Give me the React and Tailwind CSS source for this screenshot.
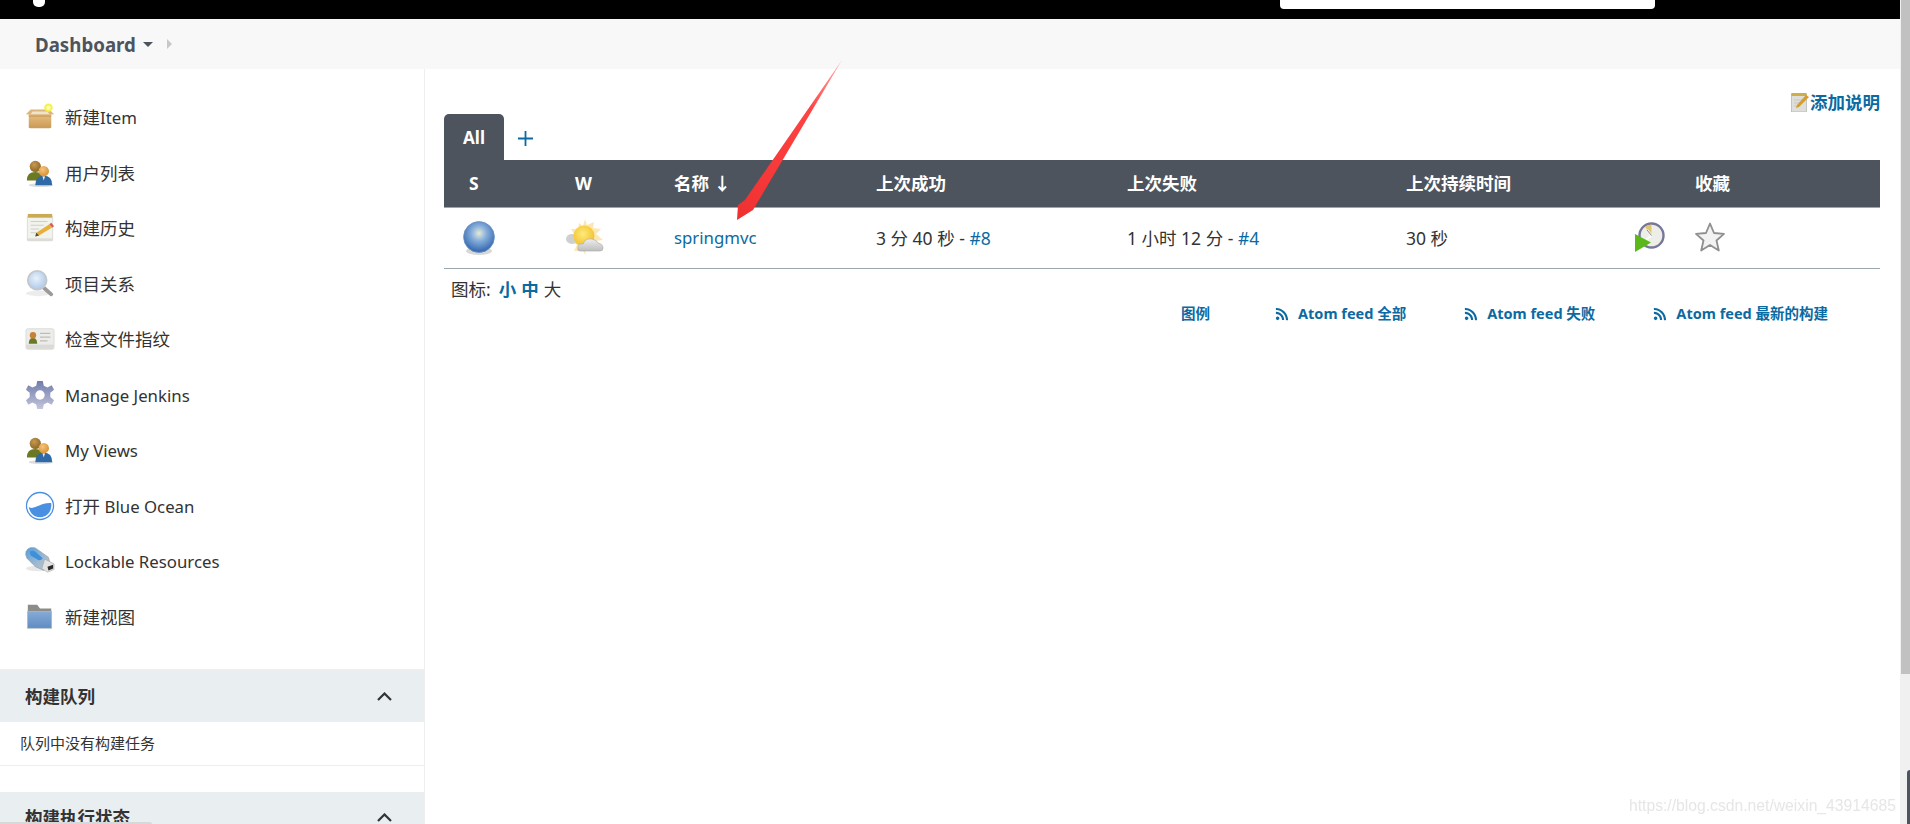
import React from 'react'
import { FaRss } from 'react-icons/fa'

function BoxIcon() {
    return (
        <svg viewBox="0 0 32 32" className="w-[30px] h-[30px]">
            <defs>
                <linearGradient id="boxG" x1="0" y1="0" x2="0" y2="1">
                    <stop offset="0" stopColor="#e8bd7c" />
                    <stop offset="1" stopColor="#c99a58" />
                </linearGradient>
            </defs>
            <path d="M4 13 H28 V27 Q28 28 26 28 H6 Q4 28 4 27 Z" fill="url(#boxG)" />
            <path d="M1 13 L6 8 H26 L31 13 L20 14 H10 Z" fill="#dcb67e" />
            <path d="M8 10 H24 L26 13 H6 Z" fill="#efe3cc" />
            <path d="M4 15 H28" stroke="#b78a4c" strokeWidth="0.8" />
            <circle cx="25" cy="6" r="4.5" fill="#f6f04a" />
            <circle cx="25" cy="6" r="2.4" fill="#fdfbb0" />
        </svg>
    )
}

function UsersIcon({ id }) {
    return (
        <svg viewBox="0 0 32 32" className="w-[30px] h-[30px]">
            <defs>
                <radialGradient id={id + 'a'} cx="0.4" cy="0.35" r="0.7">
                    <stop offset="0" stopColor="#c89a52" />
                    <stop offset="1" stopColor="#8a6222" />
                </radialGradient>
                <radialGradient id={id + 'b'} cx="0.4" cy="0.35" r="0.7">
                    <stop offset="0" stopColor="#f4c57c" />
                    <stop offset="1" stopColor="#d98e2e" />
                </radialGradient>
            </defs>
            <ellipse cx="17" cy="29" rx="13" ry="2" fill="#ddd" />
            <path d="M2 24 Q2 15 11 15 Q19 15 19 24 Z" fill="#6b7a22" />
            <circle cx="11" cy="9" r="6" fill={`url(#${id}a)`} />
            <path d="M11 29 Q11 19 20 19 Q29 19 29 29 Z" fill="#2f6aa6" />
            <path d="M18.6 19.5 L20 24 L21.4 19.5 Z" fill="#f2f2f2" />
            <circle cx="20" cy="14" r="5.6" fill={`url(#${id}b)`} />
        </svg>
    )
}

function NotepadIcon() {
    return (
        <svg viewBox="0 0 32 32" className="w-[30px] h-[30px]">
            <rect x="2" y="3" width="28" height="27" rx="1.5" fill="#dcdcd8" />
            <rect x="3" y="2" width="26" height="25" fill="#f3f3ee" />
            <rect x="3" y="1" width="26" height="4" fill="#c9ab55" />
            <path d="M6 9 H24 M6 13 H20 M6 17 H15 M6 21 H12" stroke="#cfcfc8" strokeWidth="1.2" />
            <path d="M11 25 L12 21 L26 12 L29 15.5 L15 24 Z" fill="#e5b13d" />
            <path d="M26 12 L28 10.5 L31 14 L29 15.5 Z" fill="#d8584c" />
            <path d="M11 25 L12 21 L15 24 Z" fill="#4a4a44" />
        </svg>
    )
}

function SearchIcon() {
    return (
        <svg viewBox="0 0 32 32" className="w-[30px] h-[30px]">
            <defs>
                <radialGradient id="lensG" cx="0.45" cy="0.4" r="0.65">
                    <stop offset="0" stopColor="#e8f1fb" />
                    <stop offset="1" stopColor="#a9c6e6" />
                </radialGradient>
            </defs>
            <ellipse cx="14" cy="26" rx="13" ry="3" fill="#ececec" />
            <path d="M20 20 L28 27" stroke="#9a9a9a" strokeWidth="4" strokeLinecap="round" />
            <circle cx="13" cy="12" r="10" fill="url(#lensG)" stroke="#c4c8cc" strokeWidth="2" />
        </svg>
    )
}

function CardIcon() {
    return (
        <svg viewBox="0 0 32 32" className="w-[30px] h-[30px]">
            <rect x="1" y="5" width="30" height="22" rx="2" fill="#ececea" stroke="#d6d6d2" strokeWidth="0.8" />
            <rect x="1.5" y="22" width="29" height="4.5" fill="#dadad6" />
            <path d="M4 21 Q4 15 8.5 15 Q13 15 13 21 Z" fill="#6b7a22" />
            <circle cx="8.5" cy="12" r="3.4" fill="#c8803a" />
            <path d="M16 10 H27 M16 14 H27 M16 18 H24" stroke="#bdbdb8" strokeWidth="1.2" />
        </svg>
    )
}

function GearIcon() {
    return (
        <svg viewBox="0 0 32 32" className="w-[30px] h-[30px]">
            <defs>
                <linearGradient id="gearG" x1="0" y1="0" x2="0" y2="1">
                    <stop offset="0" stopColor="#6f7cab" />
                    <stop offset="1" stopColor="#c4c5dc" />
                </linearGradient>
            </defs>
            <path
                d="M13 1 H19 L20 6 L24 8 L28.5 5.5 L31 10.5 L27 13.5 V18 L31 21.5 L28.5 26.5 L24 24 L20 26 L19 31 H13 L12 26 L8 24 L3.5 26.5 L1 21.5 L5 18 V13.5 L1 10.5 L3.5 5.5 L8 8 L12 6 Z"
                fill="url(#gearG)"
            />
            <circle cx="16" cy="16" r="5" fill="#fff" />
        </svg>
    )
}

function OceanIcon() {
    return (
        <svg viewBox="0 0 32 32" className="w-[30px] h-[30px]">
            <circle cx="16" cy="16" r="14.4" fill="#fff" stroke="#4a90e2" strokeWidth="1.4" />
            <path d="M4 17 C10 21 16 12 28 13 C29 21 24 28 16 28 C9 28 5 23 4 17 Z" fill="#4a90e2" />
        </svg>
    )
}

function UsbIcon() {
    return (
        <svg viewBox="0 0 32 32" className="w-[30px] h-[30px]">
            <defs>
                <linearGradient id="usbG" x1="0" y1="0" x2="1" y2="1">
                    <stop offset="0" stopColor="#4f9fe0" />
                    <stop offset="0.55" stopColor="#9db8d0" />
                    <stop offset="1" stopColor="#bfc5cb" />
                </linearGradient>
            </defs>
            <ellipse cx="14" cy="24" rx="13" ry="3" fill="#e8e8e8" />
            <path d="M1 6 Q4 0 11 2 L25 12 L27 19 L20 26 L11 22 L2 13 Q0 9 1 6 Z" fill="url(#usbG)" stroke="#8d99a5" strokeWidth="0.6" />
            <path d="M5 6 Q8 4 11 6 L19 13 Q17 16 14 15 L6 10 Z" fill="#3f90d8" />
            <path d="M21 14 L31 19 L31 25 L24 28 L18 24 Z" fill="#e2e2e2" stroke="#999" strokeWidth="0.5" />
            <path d="M24 22 L30 20 L30 24 L25 26 Z" fill="#2a2a2a" />
        </svg>
    )
}

function FolderIcon() {
    return (
        <svg viewBox="0 0 32 32" className="w-[30px] h-[30px]">
            <path d="M3 3 H13 L16 7 H28 V14 H3 Z" fill="#8c8c88" />
            <defs>
                <linearGradient id="folderG" x1="0" y1="0" x2="0" y2="1">
                    <stop offset="0" stopColor="#86abd6" />
                    <stop offset="1" stopColor="#5f8dc2" />
                </linearGradient>
            </defs>
            <rect x="2.5" y="10" width="26" height="18" fill="url(#folderG)" stroke="#b6bcc2" strokeWidth="0.7" />
        </svg>
    )
}

function BallIcon() {
    return (
        <svg viewBox="0 0 34 36" className="w-[34px] h-[36px]">
            <defs>
                <radialGradient id="ballG" cx="0.5" cy="0.38" r="0.62">
                    <stop offset="0" stopColor="#e4ead6" />
                    <stop offset="0.4" stopColor="#86aedb" />
                    <stop offset="1" stopColor="#2f64ac" />
                </radialGradient>
            </defs>
            <ellipse cx="17" cy="31" rx="13" ry="4" fill="#d8d8d8" />
            <circle cx="17" cy="17" r="15.4" fill="url(#ballG)" stroke="#6a8fc0" strokeWidth="0.8" />
        </svg>
    )
}

function WeatherIcon() {
    return (
        <svg viewBox="0 0 40 38" className="w-[40px] h-[38px]">
            <defs>
                <radialGradient id="sunG" cx="0.45" cy="0.4" r="0.6">
                    <stop offset="0" stopColor="#fdeb7a" />
                    <stop offset="1" stopColor="#f3c02c" />
                </radialGradient>
                <linearGradient id="cloudG" x1="0" y1="0" x2="0" y2="1">
                    <stop offset="0" stopColor="#eeeeee" />
                    <stop offset="1" stopColor="#bdbdbd" />
                </linearGradient>
            </defs>
            <path
                d="M20 0 L22 6 L29 3 L28 9 L36 10 L31 15 L38 21 L30 22 L20 32 L21 37 L18 32 L9 32 L12 26 L5 22 L11 18 L6 10 L13 10 L14 4 L18 7 Z"
                fill="#fbe7b4"
            />
            <ellipse cx="7" cy="20" rx="6" ry="5" fill="#cfcfcf" />
            <circle cx="19" cy="17" r="10.5" fill="url(#sunG)" />
            <path
                d="M15 32 Q12 32 13 28 Q13 24 18 25 Q20 19 27 20 Q32 21 33 24 Q38 25 38 29 Q38 32 35 32 Z"
                fill="url(#cloudG)"
                stroke="#a8a8a8"
                strokeWidth="0.6"
            />
        </svg>
    )
}

function BuildIcon() {
    return (
        <svg viewBox="0 0 30 30" className="w-[30px] h-[30px]">
            <circle cx="16.5" cy="13.5" r="12" fill="#eeeee8" stroke="#77779a" strokeWidth="2.4" />
            <path d="M16.5 13.5 L10 5 Q13 2.5 16.5 2.5 L16.5 13.5 Z" fill="#e2c76a" />
            <path d="M16.5 13.5 L12 8 M16.5 13.5 L11 18" stroke="#f8f8f8" strokeWidth="2.4" />
            <path d="M16.5 13.5 L12 8" stroke="#666" strokeWidth="0.8" />
            <path d="M0 12 L16 20.5 L0 30 Z" fill="#5bb81a" />
        </svg>
    )
}

function NoteIcon() {
    return (
        <svg viewBox="0 0 18 20" className="w-[18px] h-[20px]">
            <rect x="0.5" y="2" width="15" height="18" fill="#dededa" stroke="#a9a9a2" strokeWidth="0.6" />
            <rect x="0.5" y="1" width="15" height="3" fill="#cfae45" />
            <path d="M3 8 H12 M3 11 H10 M3 14 H8" stroke="#c9c9c2" strokeWidth="1" />
            <path d="M5 16 L6 13 L15 3 L18 5 L8 15 Z" fill="#d89c2c" />
        </svg>
    )
}

function Chevron() {
    return (
        <svg viewBox="0 0 15 9" className="w-[15px] h-[9px]">
            <path d="M1 8 L7.5 1.5 L14 8" fill="none" stroke="#333" strokeWidth="2.2" />
        </svg>
    )
}

// latin text runs a bit wider than the reference at the size the chinese needs
function Latin({ children }) {
    return <span className="text-[16.8px]">{children}</span>
}

const taskItems = [
    { key: 'new', label: <>新建<Latin>Item</Latin></>, icon: <BoxIcon /> },
    { key: 'users', label: '用户列表', icon: <UsersIcon id="usersA" /> },
    { key: 'history', label: '构建历史', icon: <NotepadIcon /> },
    { key: 'relation', label: '项目关系', icon: <SearchIcon /> },
    { key: 'fingerprint', label: '检查文件指纹', icon: <CardIcon /> },
    { key: 'manage', label: <Latin>Manage Jenkins</Latin>, icon: <GearIcon /> },
    { key: 'views', label: <Latin>My Views</Latin>, icon: <UsersIcon id="usersB" /> },
    { key: 'ocean', label: <>打开 <Latin>Blue Ocean</Latin></>, icon: <OceanIcon /> },
    { key: 'lockable', label: <Latin>Lockable Resources</Latin>, icon: <UsbIcon /> },
    { key: 'view', label: '新建视图', icon: <FolderIcon /> },
]

const feeds = ['Atom feed 全部', 'Atom feed 失败', 'Atom feed 最新的构建']

function App() {
    return (
        <div className="relative flex h-[824px] w-full overflow-hidden bg-white text-[#333] font-['Noto_Sans','Noto_Sans_CJK_SC',sans-serif]">
            <div className="flex-1 min-w-0 flex flex-col">
                {/* top bar */}
                <div className="h-[19px] shrink-0 bg-black flex items-start pl-[33px]">
                    <div className="w-[12px] h-[7px] bg-white rounded-b-[5px]"></div>
                    <div className="ml-[1235px] w-[375px] h-[9px] bg-white rounded-b-[4px]"></div>
                </div>

                {/* breadcrumb */}
                <div className="h-[50px] shrink-0 bg-[#f8f8f8] flex items-center pl-[35px] pt-[2px] text-[#4d545d]">
                    <span className="text-[18.7px] font-bold">Dashboard</span>
                    <span className="ml-[7px] -mt-[2px] w-0 h-0 border-x-[5px] border-x-transparent border-t-[5px] border-t-[#4d545d]"></span>
                    <span className="ml-[14px] -mt-[3px] w-0 h-0 border-y-[5px] border-y-transparent border-l-[5px] border-l-[#c8c8c8]"></span>
                </div>

                <div className="flex-1 min-h-0 flex">
                    {/* side panel */}
                    <div className="w-[425px] shrink-0 border-r border-[#eee] flex flex-col">
                        <div className="pt-[20.5px] shrink-0">
                            {taskItems.map((item) => (
                                <div key={item.key} className="h-[55.5px] flex items-center pl-[25px]">
                                    <span className="w-[30px] h-[30px] shrink-0">{item.icon}</span>
                                    <span className="ml-[10px] text-[17.5px] whitespace-nowrap">{item.label}</span>
                                </div>
                            ))}
                        </div>

                        <div className="mt-[24.5px] border-t-2 border-[#eee] shrink-0">
                            <div className="h-[51px] bg-[#e9eef1] flex items-center justify-between pl-[25px] pr-[32px]">
                                <span className="text-[17.5px] font-bold">构建队列</span>
                                <Chevron />
                            </div>
                            <div className="h-[44px] border-b border-[#eee] flex items-center pl-[20px] text-[15px]">
                                队列中没有构建任务
                            </div>
                        </div>

                        <div className="mt-[26px] h-[51px] shrink-0 bg-[#e9eef1] flex items-center justify-between pl-[25px] pr-[32px]">
                            <span className="text-[17.5px] font-bold">构建执行状态</span>
                            <Chevron />
                        </div>
                    </div>

                    {/* main panel */}
                    <div className="flex-1 min-w-0 pl-[19px] pr-[20px]">
                        <div className="h-[45px] pt-[23px] flex justify-end">
                            <a className="flex items-center h-[20px] text-[17.5px] font-bold text-[#0b6aa2]">
                                <NoteIcon />
                                <span className="ml-[1px]">添加说明</span>
                            </a>
                        </div>

                        <div className="h-[46px] flex">
                            <div className="w-[60px] pt-[1px] bg-[#4d545d] rounded-t-[5px] flex items-center justify-center text-[17px] font-bold text-white">
                                All
                            </div>
                            <div className="ml-[14px] flex items-center">
                                <svg viewBox="0 0 15 15" className="w-[15px] h-[15px] mt-[2px]">
                                    <path d="M7.5 0 V15 M0 7.5 H15" stroke="#0b6aa2" strokeWidth="1.8" />
                                </svg>
                            </div>
                        </div>

                        {/* project table */}
                        <div className="h-[48px] pl-[25px] bg-[#4d545d] border-b border-[#9aa7b0] text-[17.5px] font-bold text-white grid grid-cols-[106px_99px_202px_251px_279px_227px_62px_1fr] items-center">
                            <span>S</span>
                            <span>W</span>
                            <span>名称 ↓</span>
                            <span>上次成功</span>
                            <span>上次失败</span>
                            <span>上次持续时间</span>
                            <span></span>
                            <span>收藏</span>
                        </div>
                        <div className="h-[61px] pl-[25px] border-b border-[#9aa7b0] text-[17.5px] grid grid-cols-[105px_100px_202px_251px_279px_227px_62px_1fr] items-center">
                            <span className="-ml-[7px]"><BallIcon /></span>
                            <span className="-ml-[9px]"><WeatherIcon /></span>
                            <a className="text-[16.8px] text-[#0b6aa2]">springmvc</a>
                            <span>3 分 40 秒 - <a className="text-[#0b6aa2]">#8</a></span>
                            <span>1 小时 12 分 - <a className="text-[#0b6aa2]">#4</a></span>
                            <span>30 秒</span>
                            <span className="ml-[2px] -mt-[3px]"><BuildIcon /></span>
                            <svg viewBox="0 0 30 30" className="w-[30px] h-[30px] -mt-[2px]">
                                <path
                                    d="M15 1.5 L19 11 L29 11.8 L21.5 18.5 L23.8 28.5 L15 23 L6.2 28.5 L8.5 18.5 L1 11.8 L11 11 Z"
                                    fill="#f2f2f2"
                                    stroke="#8f8f8f"
                                    strokeWidth="1.8"
                                    strokeLinejoin="round"
                                />
                            </svg>
                        </div>

                        <div className="h-[35px] pt-[6px] pl-[7px] flex items-center text-[17.5px]">
                            <span>图标:</span>
                            <a className="ml-[8px] font-bold text-[#0b6aa2]">小</a>
                            <a className="ml-[5px] font-bold text-[#0b6aa2]">中</a>
                            <span className="ml-[5px]">大</span>
                        </div>

                        <div className="flex justify-end items-center h-[20px] pr-[52px] gap-[58px] text-[14.5px] font-bold text-[#0b6aa2]">
                            <a className="mr-[7px]">图例</a>
                            {feeds.map((feed) => (
                                <a key={feed} className="flex items-center whitespace-nowrap">
                                    <FaRss className="w-[14px] h-[14px] mr-[9px]" />
                                    {feed}
                                </a>
                            ))}
                        </div>
                    </div>
                </div>
            </div>

            {/* browser scrollbar */}
            <div className="w-[10px] shrink-0 bg-[#f0f0f0]">
                <div className="ml-[1px] h-[674px] bg-[#c1c1c1]"></div>
            </div>

            {/* annotation arrow added on the screenshot */}
            <svg className="absolute left-0 top-0 w-full h-full pointer-events-none" viewBox="0 0 1910 824">
                <defs>
                    <linearGradient id="arrowG" x1="842" y1="60" x2="737" y2="220" gradientUnits="userSpaceOnUse">
                        <stop offset="0" stopColor="#ffb0b0" />
                        <stop offset="0.3" stopColor="#f44" />
                        <stop offset="1" stopColor="#f03030" />
                    </linearGradient>
                </defs>
                <polygon points="842,60 753,210 737,220 738,205 745,200" fill="url(#arrowG)" />
            </svg>

            {/* leftovers at the screenshot's edges and the blog watermark */}
            <div className="absolute left-0 bottom-0 w-[152px] h-[2px] bg-[#d8d8d8] rounded-tr-[3px]"></div>
            <div className="absolute right-0 top-[770px] w-[3px] h-[54px] bg-[#4d545d] rounded-tl-[3px]"></div>
            <div className="absolute left-[1629px] top-[796px] text-[15.7px] leading-[20px] whitespace-nowrap text-[#e6e6e6] blur-[0.4px] font-['Liberation_Sans',sans-serif]">
                https://blog.csdn.net/weixin_43914685
            </div>
        </div>
    )
}

export default App
